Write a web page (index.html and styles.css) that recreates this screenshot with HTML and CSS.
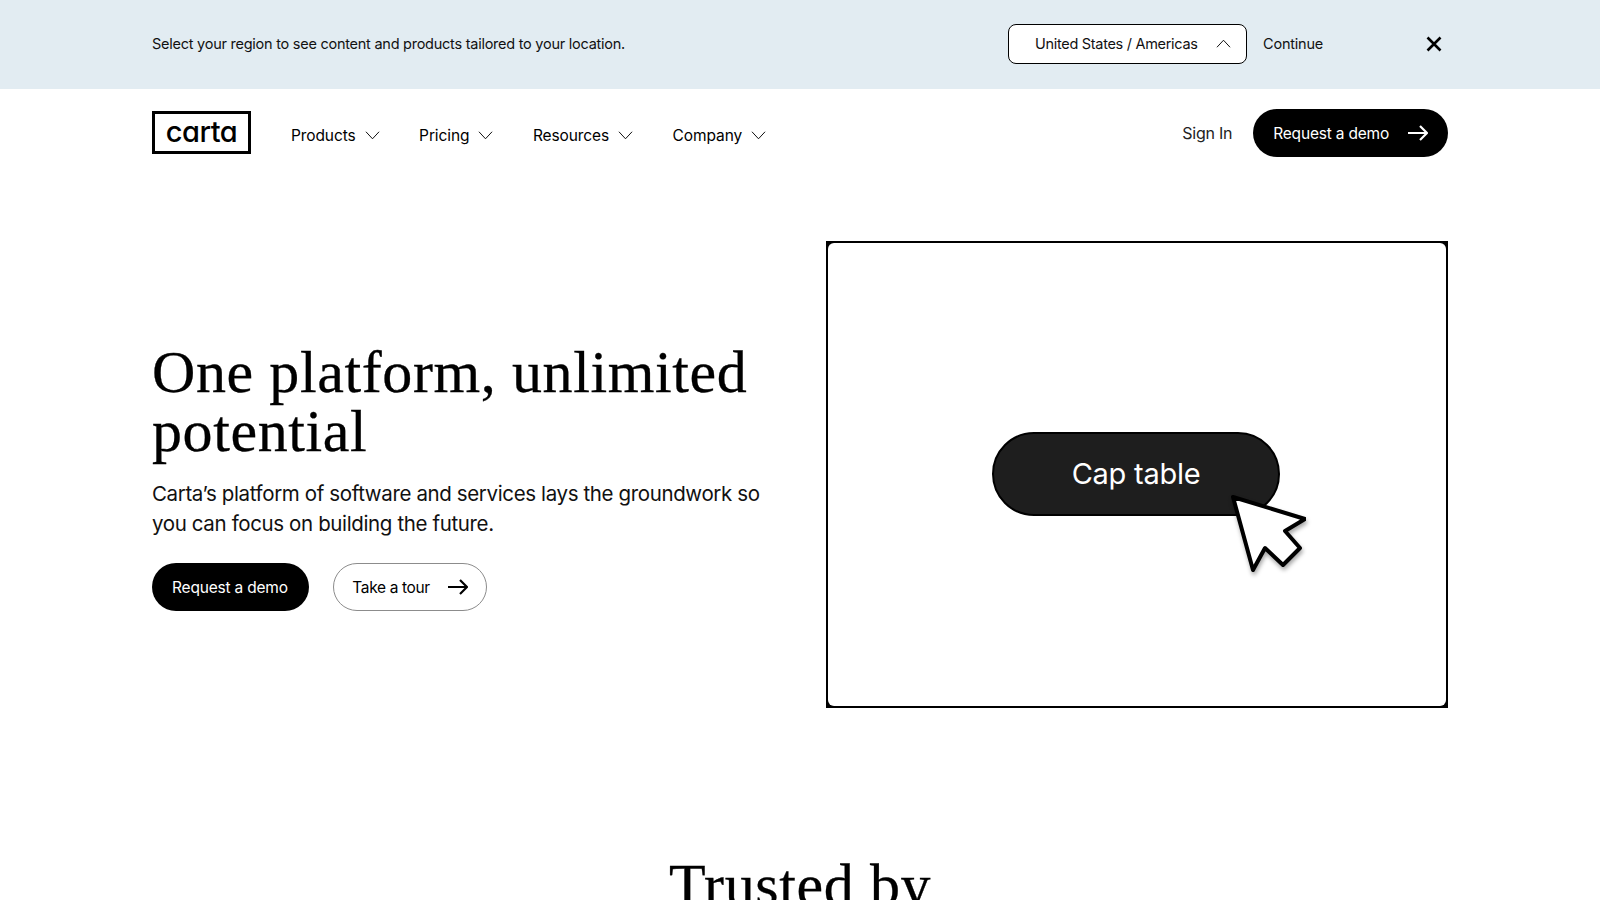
FILE: index.html
```html
<!DOCTYPE html>
<html>
<head>
  <title>Carta</title>
  <meta charset="utf-8">
  <link rel="stylesheet" href="styles.css">
</head>
<body>
  <div class="region-bar">
    <p class="region-text">Select your region to see content and products tailored to your location.</p>
    <div class="region-select">
      <span>United States / Americas</span>
      <svg class="chev" viewBox="0 0 16 9"><path d="M1 8.5 L8 1 L15 8.5"/></svg>
    </div>
    <a class="region-continue">Continue</a>
    <svg class="region-close" viewBox="0 0 16 16"><path d="M1.5 1.5 L14.5 14.5 M14.5 1.5 L1.5 14.5"/></svg>
  </div>

  <header class="site-header">
    <div class="logo">carta</div>
    <nav class="main-nav">
      <a>Products <svg class="chev" viewBox="0 0 16 9"><path d="M1 .5 L8 8 L15 .5"/></svg></a>
      <a>Pricing <svg class="chev" viewBox="0 0 16 9"><path d="M1 .5 L8 8 L15 .5"/></svg></a>
      <a>Resources <svg class="chev" viewBox="0 0 16 9"><path d="M1 .5 L8 8 L15 .5"/></svg></a>
      <a>Company <svg class="chev" viewBox="0 0 16 9"><path d="M1 .5 L8 8 L15 .5"/></svg></a>
    </nav>
    <a class="sign-in">Sign In</a>
    <a class="btn btn-dark btn-header">Request a demo
      <svg class="arrow" viewBox="0 0 20 16"><path d="M0 8 H19 M12 1 L19 8 L12 15"/></svg>
    </a>
  </header>

  <section class="hero">
    <div class="hero-copy">
      <h1>One platform, unlimited potential</h1>
      <p class="hero-sub">Carta’s platform of software and services lays the groundwork so you can focus on building the future.</p>
      <div class="hero-actions">
        <a class="btn btn-dark">Request a demo</a>
        <a class="btn btn-outline">Take a tour
          <svg class="arrow" viewBox="0 0 20 16"><path d="M0 8 H19 M12 1 L19 8 L12 15"/></svg>
        </a>
      </div>
    </div>
    <div class="hero-frame">
      <div class="hero-inner">
        <div class="cap-pill">Cap table</div>
        <svg class="cursor" viewBox="0 0 76 78"><path d="M3 3 L75 25 L55 37 L70 54 L53 71 L35 54 L23 76 Z"/></svg>
      </div>
    </div>
  </section>

  <section class="trusted">
    <h2>Trusted by</h2>
  </section>
</body>
</html>
```

FILE: styles.css
```css
* {margin: 0; padding: 0; box-sizing: border-box;}
html, body {height: 900px; overflow: hidden;}
body {font-family: "Inter", "Liberation Sans", sans-serif; color: #000; background: #fff;}
svg {display: block;}

.chev {width: 15px; height: 9px; fill: none; stroke: #000; stroke-width: 1;}
.arrow {width: 20px; height: 16px; fill: none; stroke: currentColor; stroke-width: 2.2;}

.region-bar {height: 89px; background: #e2ecf2; padding: 0 152px 2px; display: flex; align-items: center; font-size: 14.5px; letter-spacing: -0.25px; color: #111;}
.region-text {flex: 1;}
.region-select {width: 239px; height: 40px; background: #fff; border: 1px solid #000; border-radius: 8px; display: flex; align-items: center; justify-content: space-between; padding: 0 15px 0 26px; letter-spacing: -0.3px;}
.region-continue {margin-left: 16px; width: 163px; letter-spacing: -0.2px;}
.region-close {width: 16px; height: 16px; fill: none; stroke: #000; stroke-width: 2.6; margin-right: 6px;}

.site-header {display: flex; align-items: center; padding: 20px 152px 0;}
.logo {width: 99px; height: 43px; margin-bottom: 2px; border: 3px solid #000; font-size: 29px; font-weight: 500; line-height: 35px; text-align: center; letter-spacing: -0.5px; font-feature-settings: "cv11";}
.main-nav {flex: 1; display: flex; gap: 39.5px; margin: 4px 0 0 40px; font-size: 15.5px; letter-spacing: -0.1px;}
.main-nav a {display: flex; align-items: center; gap: 9px;}
.sign-in {font-size: 16px; margin-right: 21px; letter-spacing: -0.25px; color: #222;}

.btn {display: flex; align-items: center; height: 48px; border-radius: 24px; font-size: 15.5px; letter-spacing: -0.2px; white-space: nowrap;}
.btn-dark {background: #000; color: #fff; padding: 0 21px 0 20px;}
.btn-header {gap: 19px; padding-right: 20px;}
.btn-outline {border: 1px solid #8c8c8c; padding: 0 18.5px; gap: 18px; letter-spacing: -0.35px;}

.hero {display: flex; justify-content: space-between; align-items: center; padding: 84px 152px 0;}
.hero-copy {width: 640px; padding-top: 5px;}
h1 {font-family: "Liberation Serif", serif; font-weight: 400; font-size: 60px; line-height: 59px; letter-spacing: 0.6px; -webkit-text-stroke: 0.3px #000;}
.hero-sub {font-size: 20.5px; line-height: 30px; margin-top: 18px; letter-spacing: -0.37px; color: #111;}
.hero-actions {display: flex; gap: 24px; margin-top: 24px;}

.hero-frame {width: 622px; height: 467px; background: #000; padding: 2px;}
.hero-inner {position: relative; height: 100%; background: #fff; border-radius: 6px; display: flex; align-items: center; justify-content: center;}
.cap-pill {width: 288px; height: 84px; margin: 0 2px 1px 0; padding-bottom: 2px; background: #1e1e1e; border: 2px solid #000; border-radius: 42px; color: #fff; font-size: 29px; letter-spacing: -0.25px; display: flex; align-items: center; justify-content: center;}
.cursor {position: absolute; left: 402px; top: 251px; width: 76px; height: 78px; fill: #fff; stroke: #000; stroke-width: 4; stroke-linejoin: round; filter: drop-shadow(1px 3px 2px rgba(0, 0, 0, .35));}

.trusted {text-align: center; padding-top: 147px;}
h2 {font-family: "Liberation Serif", serif; font-weight: 400; font-size: 60px; line-height: 60px; letter-spacing: 0.6px; -webkit-text-stroke: 0.3px #000;}
```
